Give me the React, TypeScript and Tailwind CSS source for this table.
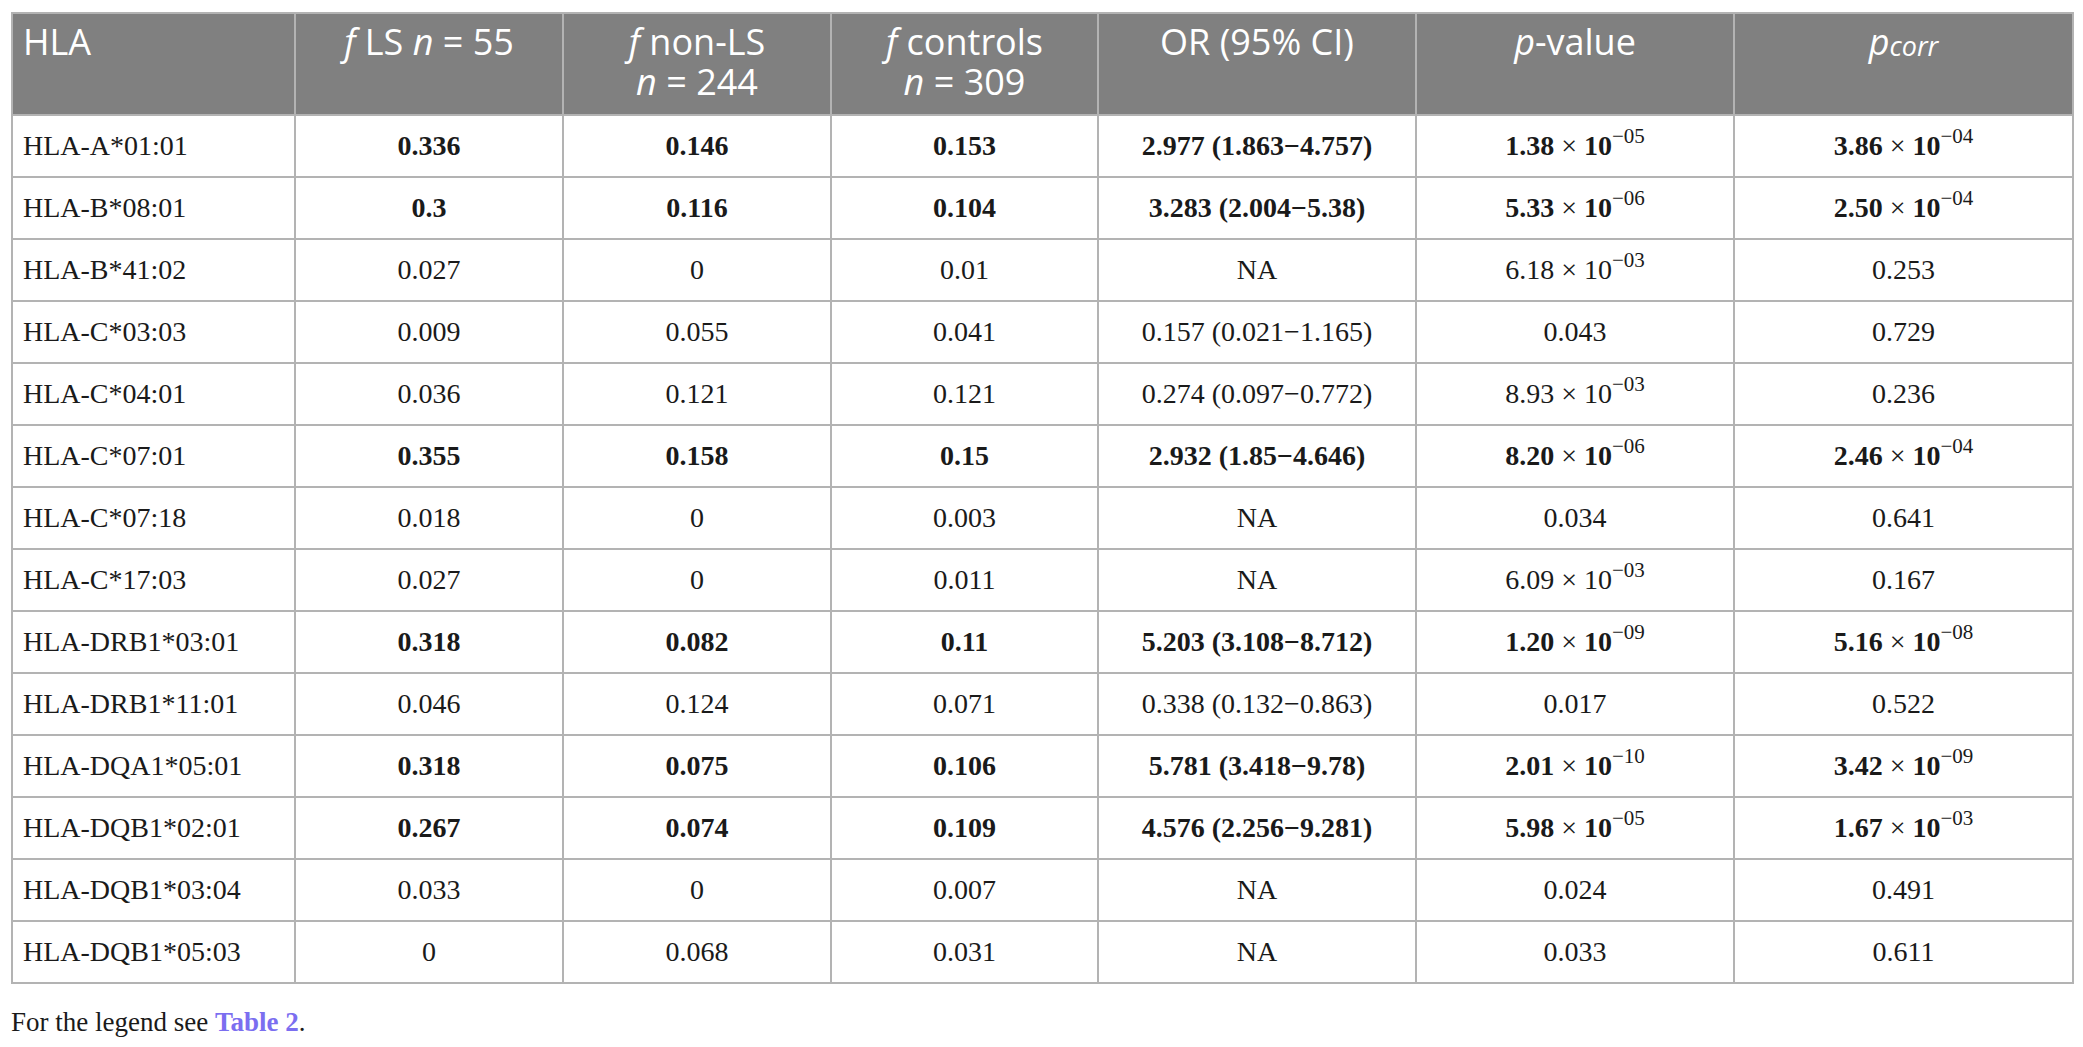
import React from "react";

type Row = {
  hla: string;
  ls: string;
  nonLs: string;
  controls: string;
  or: string;
  p: [string, string?];
  pc: [string, string?];
  bold?: boolean;
};

const rows: Row[] = [
  { hla: "HLA-A*01:01", ls: "0.336", nonLs: "0.146", controls: "0.153", or: "2.977 (1.863\u22124.757)", p: ["1.38", "05"], pc: ["3.86", "04"], bold: true },
  { hla: "HLA-B*08:01", ls: "0.3", nonLs: "0.116", controls: "0.104", or: "3.283 (2.004\u22125.38)", p: ["5.33", "06"], pc: ["2.50", "04"], bold: true },
  { hla: "HLA-B*41:02", ls: "0.027", nonLs: "0", controls: "0.01", or: "NA", p: ["6.18", "03"], pc: ["0.253"] },
  { hla: "HLA-C*03:03", ls: "0.009", nonLs: "0.055", controls: "0.041", or: "0.157 (0.021\u22121.165)", p: ["0.043"], pc: ["0.729"] },
  { hla: "HLA-C*04:01", ls: "0.036", nonLs: "0.121", controls: "0.121", or: "0.274 (0.097\u22120.772)", p: ["8.93", "03"], pc: ["0.236"] },
  { hla: "HLA-C*07:01", ls: "0.355", nonLs: "0.158", controls: "0.15", or: "2.932 (1.85\u22124.646)", p: ["8.20", "06"], pc: ["2.46", "04"], bold: true },
  { hla: "HLA-C*07:18", ls: "0.018", nonLs: "0", controls: "0.003", or: "NA", p: ["0.034"], pc: ["0.641"] },
  { hla: "HLA-C*17:03", ls: "0.027", nonLs: "0", controls: "0.011", or: "NA", p: ["6.09", "03"], pc: ["0.167"] },
  { hla: "HLA-DRB1*03:01", ls: "0.318", nonLs: "0.082", controls: "0.11", or: "5.203 (3.108\u22128.712)", p: ["1.20", "09"], pc: ["5.16", "08"], bold: true },
  { hla: "HLA-DRB1*11:01", ls: "0.046", nonLs: "0.124", controls: "0.071", or: "0.338 (0.132\u22120.863)", p: ["0.017"], pc: ["0.522"] },
  { hla: "HLA-DQA1*05:01", ls: "0.318", nonLs: "0.075", controls: "0.106", or: "5.781 (3.418\u22129.78)", p: ["2.01", "10"], pc: ["3.42", "09"], bold: true },
  { hla: "HLA-DQB1*02:01", ls: "0.267", nonLs: "0.074", controls: "0.109", or: "4.576 (2.256\u22129.281)", p: ["5.98", "05"], pc: ["1.67", "03"], bold: true },
  { hla: "HLA-DQB1*03:04", ls: "0.033", nonLs: "0", controls: "0.007", or: "NA", p: ["0.024"], pc: ["0.491"] },
  { hla: "HLA-DQB1*05:03", ls: "0", nonLs: "0.068", controls: "0.031", or: "NA", p: ["0.033"], pc: ["0.611"] },
];

const Sci = ({ v }: { v: [string, string?] }) =>
  v[1] ? (
    <span>
      {v[0]} <span className="font-normal">{"\u00d7"}</span> 10
      <span className="font-normal text-[0.75em] relative -top-[0.55em] leading-none">
        {"\u2212"}
        {v[1]}
      </span>
    </span>
  ) : (
    <span>{v[0]}</span>
  );

const th = "border-2 border-[#b3b3b3] align-top pt-[8px] px-[10px] font-normal leading-[40px]";
const td = "border-2 border-[#b3b3b3] h-[62px] px-[10px] text-center";

export default function App() {
  return (
    <div className="bg-white w-[2083px] h-[1047px] pt-[12px] pl-[11px] text-[#1a1a1a]">
      <table className="border-collapse w-[2061px] table-fixed">
        <colgroup>
          <col className="w-[283px]" />
          <col className="w-[268px]" />
          <col className="w-[268px]" />
          <col className="w-[267px]" />
          <col className="w-[318px]" />
          <col className="w-[318px]" />
          <col className="w-[339px]" />
        </colgroup>
        <thead>
          <tr className="bg-[#808080] text-white text-[36px] h-[102px] [font-family:'Open_Sans',sans-serif]">
            <th className={th + " text-left"}>HLA</th>
            <th className={th}>
              <i>f</i> LS <i>n</i> = 55
            </th>
            <th className={th}>
              <i>f</i> non-LS
              <br />
              <i>n</i> = 244
            </th>
            <th className={th}>
              <i>f</i> controls
              <br />
              <i>n</i> = 309
            </th>
            <th className={th}>OR (95% CI)</th>
            <th className={th}>
              <i>p</i>-value
            </th>
            <th className={th}>
              <i>p</i>
              <sub className="italic text-[0.75em] relative top-[0.05em]">corr</sub>
            </th>
          </tr>
        </thead>
        <tbody className="text-[28px] [font-family:'Liberation_Serif',serif]">
          {rows.map((r) => (
            <tr key={r.hla} className={r.bold ? "font-bold" : ""}>
              <td className={td + " text-left font-normal"}>{r.hla}</td>
              <td className={td}>{r.ls}</td>
              <td className={td}>{r.nonLs}</td>
              <td className={td}>{r.controls}</td>
              <td className={td}>{r.or}</td>
              <td className={td}>
                <Sci v={r.p} />
              </td>
              <td className={td}>
                <Sci v={r.pc} />
              </td>
            </tr>
          ))}
        </tbody>
      </table>
      <p className="mt-[18px] text-[27px] [font-family:'Liberation_Serif',serif]">
        For the legend see <span className="text-[#7b6ef0] font-semibold">Table 2</span>.
      </p>
    </div>
  );
}
